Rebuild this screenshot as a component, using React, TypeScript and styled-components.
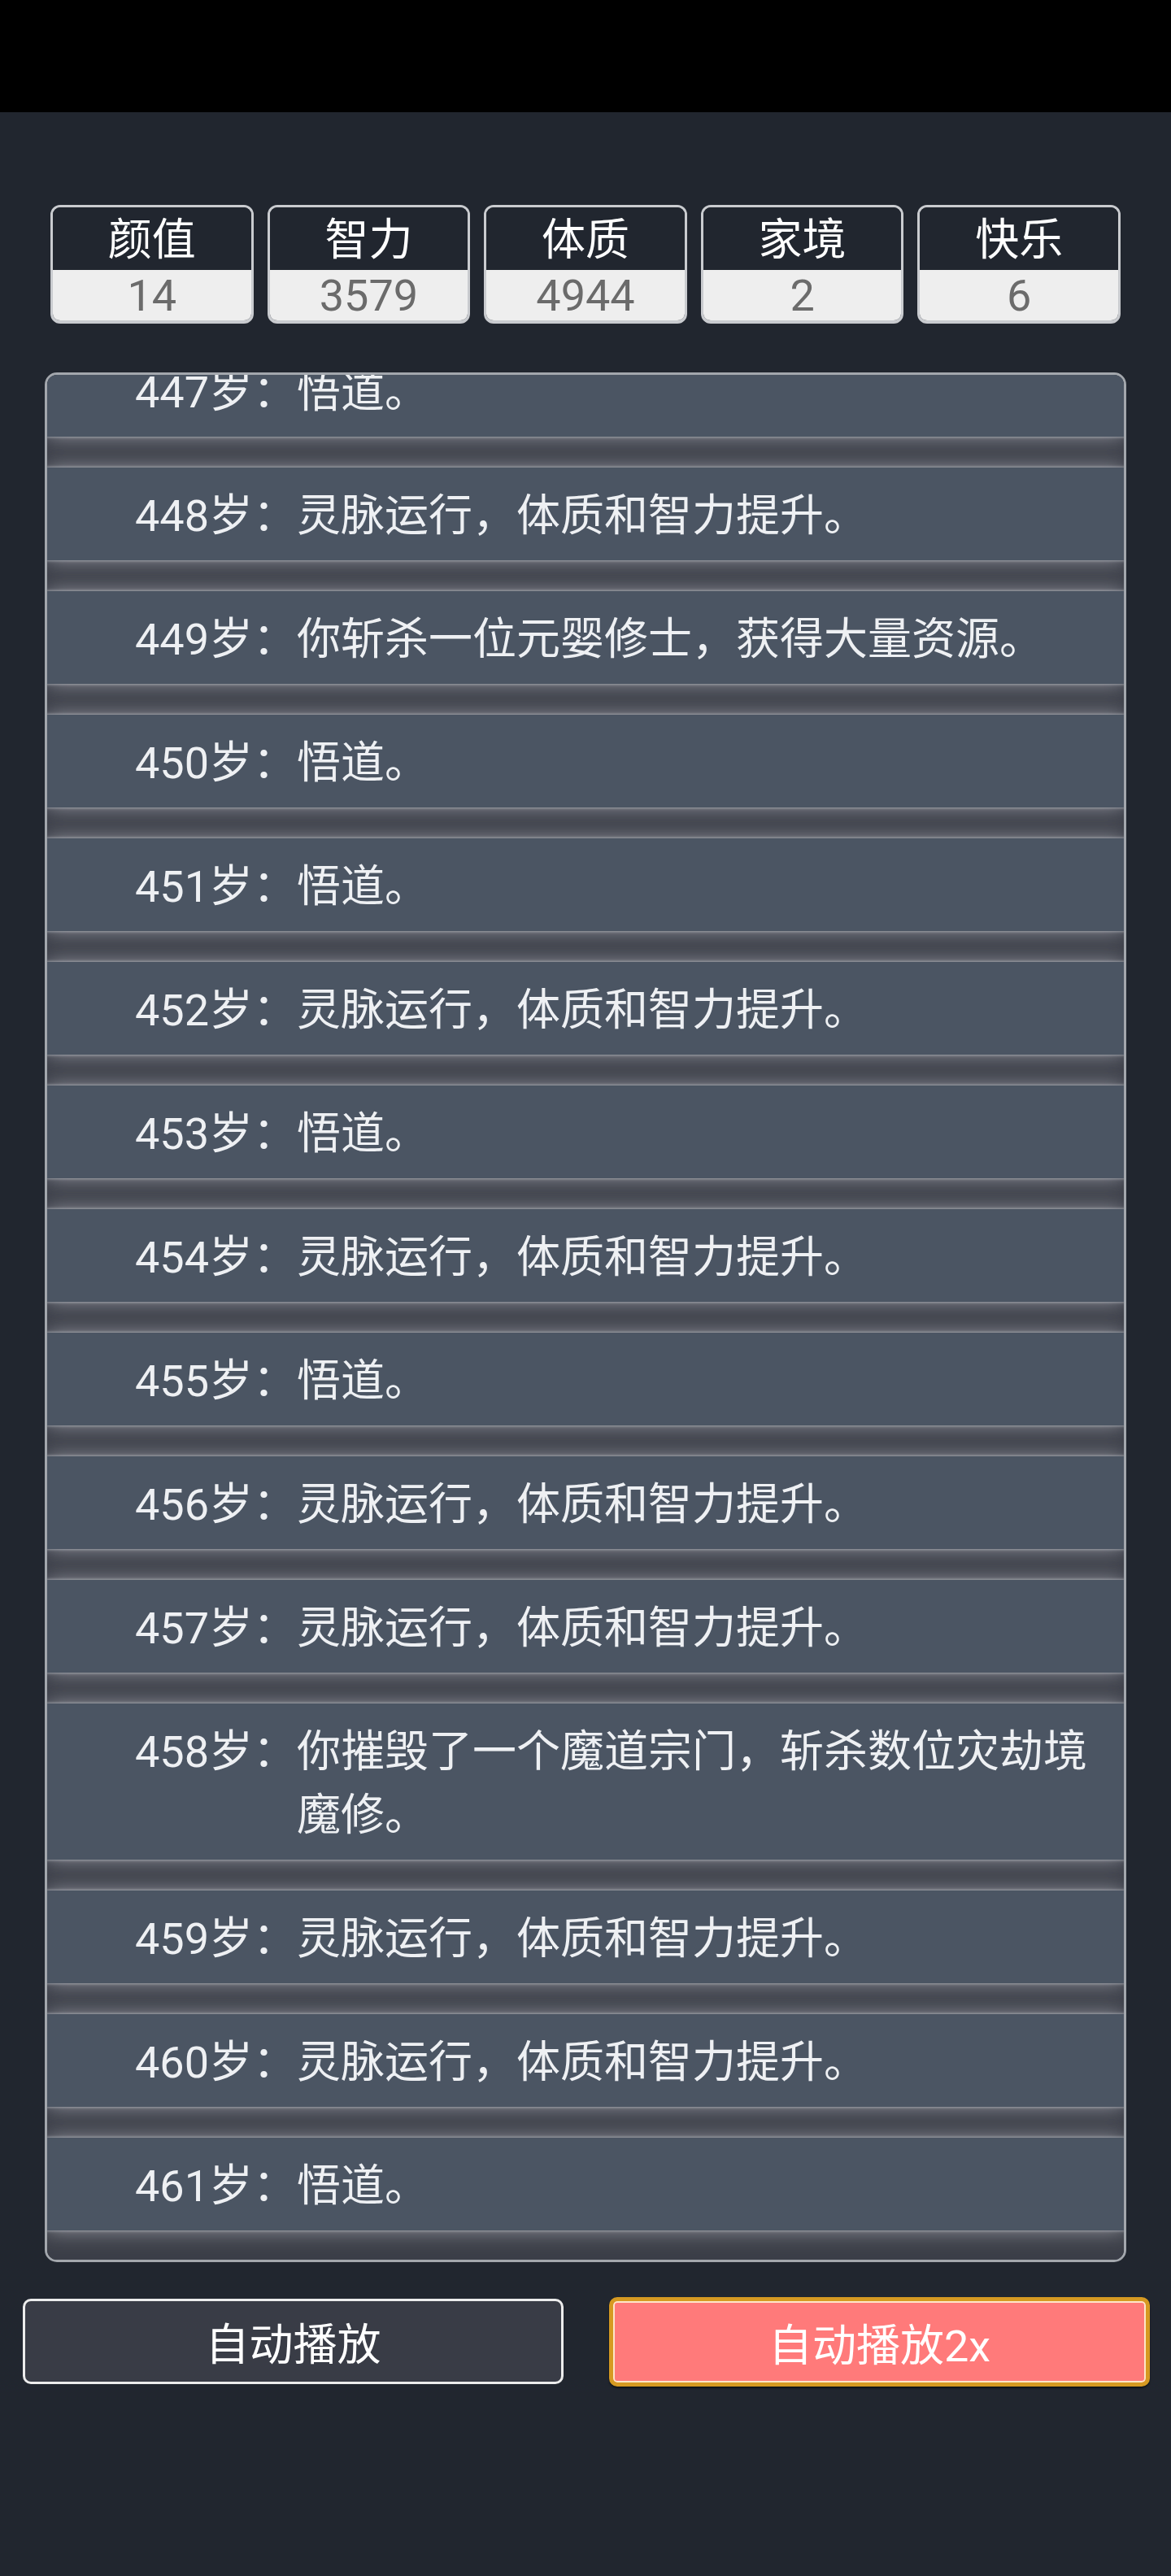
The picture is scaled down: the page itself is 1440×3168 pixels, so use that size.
import React, { useLayoutEffect, useRef } from 'react';
import styled, { createGlobalStyle } from 'styled-components';

const GlobalStyle = createGlobalStyle`
  html, body {
    margin: 0;
    padding: 0;
    background: #21262f;
  }
  body {
    font-family: Roboto, "Noto Sans CJK SC", "Noto Sans", sans-serif;
    color: #eef0f3;
  }
  * {
    box-sizing: border-box;
  }
`;

const Screen = styled.div`
  width: 1440px;
  min-height: 3168px;
  background: #21262f;
  display: flex;
  flex-direction: column;
`;

const StatusBar = styled.div`
  height: 138px;
  background: #000;
`;

const Main = styled.main`
  display: flex;
  flex-direction: column;
  padding: 114px 55px 0;
`;

const StatRow = styled.div`
  display: grid;
  grid-template-columns: repeat(5, 1fr);
  gap: 17px;
  margin: 0 7px;
`;

const StatCard = styled.div`
  display: flex;
  flex-direction: column;
  border: 3px solid #c9cbcf;
  border-bottom-width: 4px;
  border-radius: 12px;
  overflow: hidden;
  height: 146px;
`;

const StatLabel = styled.div`
  height: 77px;
  padding-top: 6px;
  display: flex;
  align-items: center;
  justify-content: center;
  background: #21262f;
  color: #ffffff;
  font-size: 54px;
  line-height: 1.2;
`;

const StatValue = styled.div`
  flex: 1;
  padding-top: 2px;
  display: flex;
  align-items: center;
  justify-content: center;
  background: #eeeeee;
  color: #6b6b6b;
  font-size: 54px;
  line-height: 1.1;
`;

const LogPanel = styled.div`
  margin-top: 60px;
  height: 2324px;
  border: 3px solid #a3a7ad;
  border-radius: 15px;
  background: #3c3f48;
  overflow-y: auto;
  scrollbar-width: none;
  &::-webkit-scrollbar {
    display: none;
  }
`;

const LogList = styled.div`
  display: flex;
  flex-direction: column;
  gap: 38px;
  padding: 38px 0 36px;
`;

const Entry = styled.div`
  display: flex;
  padding: 21px 20px 15px 108px;
  background: #4b5563;
  box-shadow: 0 0 3px 1px rgba(190, 194, 202, 0.6),
    0 0 24px rgba(225, 228, 235, 0.55);
  font-size: 54px;
  line-height: 78px;
  color: #eef0f3;
`;

const Age = styled.span`
  flex: none;
  white-space: nowrap;
`;

const EventText = styled.span`
  flex: 1;
`;

const ButtonRow = styled.div`
  display: grid;
  grid-template-columns: 1fr 1fr;
  gap: 56px;
  margin: 43px -29px 0 -27px;
`;

const PlayButton = styled.button<{ $active?: boolean }>`
  height: ${(p) => (p.$active ? '110px' : '105px')};
  margin-top: ${(p) => (p.$active ? '0' : '2px')};
  border-radius: 10px;
  font-family: inherit;
  font-size: 54px;
  color: #ffffff;
  cursor: pointer;
  background: ${(p) => (p.$active ? '#ff7a7a' : '#393c46')};
  border: ${(p) => (p.$active ? '5px solid #d69a22' : '3px solid #ececec')};
  box-shadow: ${(p) =>
    p.$active ? 'inset 0 0 0 2px #ffe6c8, 0 2px 2px rgba(0,0,0,0.5)' : 'none'};
`;

const stats = [
  { label: '颜值', value: 14 },
  { label: '智力', value: 3579 },
  { label: '体质', value: 4944 },
  { label: '家境', value: 2 },
  { label: '快乐', value: 6 },
];

const GROW = '灵脉运行，体质和智力提升。';
const INSIGHT = '悟道。';

const events: { age: number; text: string }[] = [
  { age: 440, text: GROW },
  { age: 441, text: INSIGHT },
  { age: 442, text: GROW },
  { age: 443, text: INSIGHT },
  { age: 444, text: GROW },
  { age: 445, text: GROW },
  { age: 446, text: INSIGHT },
  { age: 447, text: INSIGHT },
  { age: 448, text: GROW },
  { age: 449, text: '你斩杀一位元婴修士，获得大量资源。' },
  { age: 450, text: INSIGHT },
  { age: 451, text: INSIGHT },
  { age: 452, text: GROW },
  { age: 453, text: INSIGHT },
  { age: 454, text: GROW },
  { age: 455, text: INSIGHT },
  { age: 456, text: GROW },
  { age: 457, text: GROW },
  { age: 458, text: '你摧毁了一个魔道宗门，斩杀数位灾劫境魔修。' },
  { age: 459, text: GROW },
  { age: 460, text: GROW },
  { age: 461, text: INSIGHT },
];

export default function App() {
  const logRef = useRef<HTMLDivElement>(null);

  // keep the newest year in view
  useLayoutEffect(() => {
    const el = logRef.current;
    if (el) el.scrollTop = el.scrollHeight;
  }, []);

  return (
    <>
      <GlobalStyle />
      <Screen>
        <StatusBar />
        <Main>
          <StatRow>
            {stats.map((s) => (
              <StatCard key={s.label}>
                <StatLabel>{s.label}</StatLabel>
                <StatValue>{s.value}</StatValue>
              </StatCard>
            ))}
          </StatRow>

          <LogPanel ref={logRef}>
            <LogList>
              {events.map((e) => (
                <Entry key={e.age}>
                  <Age>{e.age}岁：</Age>
                  <EventText>{e.text}</EventText>
                </Entry>
              ))}
            </LogList>
          </LogPanel>

          <ButtonRow>
            <PlayButton>自动播放</PlayButton>
            <PlayButton $active>自动播放2x</PlayButton>
          </ButtonRow>
        </Main>
      </Screen>
    </>
  );
}
